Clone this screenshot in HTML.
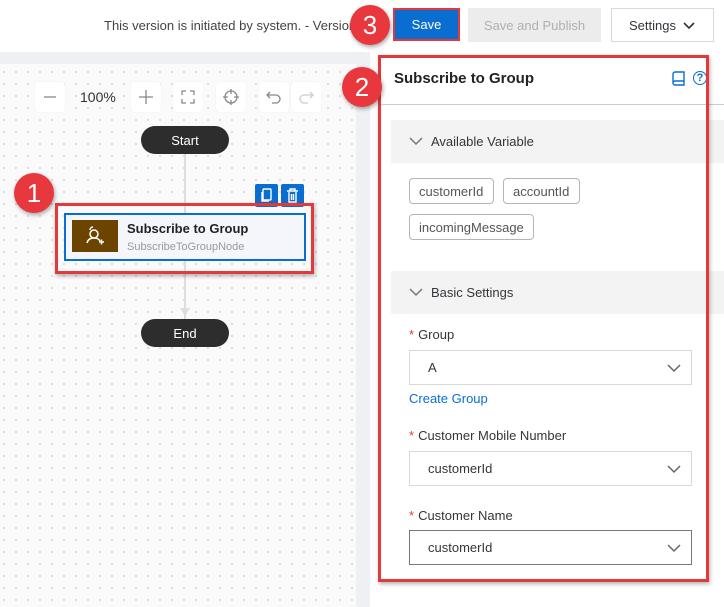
<!DOCTYPE html>
<html><head><meta charset="utf-8"><style>
*{box-sizing:border-box;margin:0;padding:0}
body{width:724px;height:607px;overflow:hidden;background:#eef0f4;font-family:"Liberation Sans",sans-serif;position:relative;color:#32363a}
.a{position:absolute}
.top{left:0;top:0;width:724px;height:52px;background:#fff}
.canvas{left:0;top:64px;width:356px;height:543px;background-color:#fafafa;background-image:radial-gradient(circle,#b4b4cc 0.6px,transparent 0.9px);background-size:12px 12px;background-position:10px 2px}
.panel{left:370px;top:52px;width:354px;height:555px;background:#fff}
.tb{top:82px;width:30px;height:30px;background:#fff;border-radius:4px;box-shadow:0 0 2px rgba(0,0,0,.05);display:flex;align-items:center;justify-content:center;color:#888;font-size:20px}
.pill{width:88px;height:28px;background:#2d2d2d;border-radius:14px;color:#fff;font-size:13px;display:flex;align-items:center;justify-content:center}
.call{width:40px;height:40px;border-radius:50%;background:#e8383d;color:#fff;font-size:26px;display:flex;align-items:center;justify-content:center;box-shadow:1px 2px 4px rgba(0,0,0,.35)}
.sec{left:391px;width:333px;height:43px;background:#f3f3f3;font-size:13px;display:flex;align-items:center;padding-left:40px}
.tag{height:26px;border:1px solid #b5b5b5;border-radius:4px;font-size:13px;color:#555;display:flex;align-items:center;padding:0 9px}
.lbl{left:409px;font-size:13px;color:#32363a}
.lbl b{color:#e5383b;font-weight:normal;margin-right:4px}
.sel{left:409px;width:283px;height:35px;border:1px solid #d9d9d9;font-size:13px;padding-left:18px;display:flex;align-items:center}
.chev{right:10px;top:10px;width:14px;height:14px}
</style></head><body>
<div class="a top"></div>
<div class="a" style="left:104px;top:18px;width:248px;overflow:hidden;white-space:nowrap;font-size:13px;color:#444">This version is initiated by system. - Version</div>
<div class="a" style="left:393px;top:8px;width:67px;height:33px;background:#0a6ed1;border:2px solid #e5383b;color:#fff;font-size:13px;display:flex;align-items:center;justify-content:center">Save</div>
<div class="a" style="left:468px;top:8px;width:133px;height:34px;background:#ececec;color:#b0b0b0;font-size:13px;display:flex;align-items:center;justify-content:center">Save and Publish</div>
<div class="a" style="left:611px;top:8px;width:103px;height:34px;background:#fff;border:1px solid #d9d9d9;font-size:13px;display:flex;align-items:center;justify-content:center">Settings <svg width="14" height="10" style="margin-left:6px" viewBox="0 0 14 10"><path d="M2 3l5 5 5-5" fill="none" stroke="#333" stroke-width="1.6"/></svg></div>

<div class="a canvas"></div>
<div class="a tb" style="left:35px"><svg width="14" height="14"><path d="M1 7h12" stroke="#888" stroke-width="1.3"/></svg></div>
<div class="a" style="left:80px;top:89px;font-size:14px;color:#333">100%</div>
<div class="a tb" style="left:131px"><svg width="16" height="16"><path d="M1 8h14M8 1v14" stroke="#888" stroke-width="1.3"/></svg></div>
<div class="a tb" style="left:173px"><svg width="14" height="14"><path d="M1 5V1h4M9 1h4v4M13 9v4H9M5 13H1V9" fill="none" stroke="#888" stroke-width="1.3"/></svg></div>
<div class="a tb" style="left:216px"><svg width="16" height="16"><circle cx="8" cy="8" r="6" fill="none" stroke="#888" stroke-width="1.3"/><path d="M8 0v5M8 11v5M0 8h5M11 8h5" stroke="#888" stroke-width="1.3"/></svg></div>
<div class="a tb" style="left:259px"><svg width="16" height="16"><path d="M4 3L1 6l3 3M1 6h9a4 4 0 010 8H6" fill="none" stroke="#888" stroke-width="1.3"/></svg></div>
<div class="a tb" style="left:291px"><svg width="16" height="16"><path d="M12 3l3 3-3 3M15 6H6a4 4 0 000 8h4" fill="none" stroke="#ccc" stroke-width="1.3"/></svg></div>
<div class="a" style="left:184px;top:154px;width:2px;height:166px;background:#ddd"></div>
<div class="a" style="left:180px;top:308px;width:0;height:0;border-left:5px solid transparent;border-right:5px solid transparent;border-top:8px solid #ddd"></div>
<div class="a pill" style="left:141px;top:126px">Start</div>
<div class="a pill" style="left:141px;top:319px">End</div>
<div class="a" style="left:255px;top:184px;width:23px;height:23px;background:#0a6ed1;border-radius:2px"><svg width="23" height="23"><rect x="8" y="5" width="8" height="11" rx="1" fill="none" stroke="#fff" stroke-width="1.4"/><path d="M7 8v9h7" fill="none" stroke="#fff" stroke-width="1.4"/></svg></div>
<div class="a" style="left:281px;top:184px;width:23px;height:23px;background:#0a6ed1;border-radius:2px"><svg width="23" height="23"><path d="M6 7h11M9 7V5h5v2M8 8v10h7V8M10.5 10v6M12.5 10v6" fill="none" stroke="#fff" stroke-width="1.4"/></svg></div>
<div class="a" style="left:55px;top:203px;width:259px;height:71px;border:3px solid #e5383b;box-shadow:1px 2px 4px rgba(0,0,0,.3)"></div>
<div class="a" style="left:64px;top:213px;width:242px;height:48px;border:2px solid #0a6ed1;background:#f5f6fc"></div>
<div class="a" style="left:72px;top:220px;width:46px;height:32px;background:#6b4400"><svg width="46" height="32"><circle cx="22" cy="14" r="4" fill="none" stroke="#fff" stroke-width="1.5"/><path d="M15 23c1-4 4-5 7-5s5 1 6 3M18 10a3 3 0 013 -3" fill="none" stroke="#fff" stroke-width="1.5"/><path d="M27 22h5M29.5 19.5v5" stroke="#fff" stroke-width="1.5"/></svg></div>
<div class="a" style="left:127px;top:221px;font-size:13px;font-weight:bold;color:#222">Subscribe to Group</div>
<div class="a" style="left:127px;top:241px;font-size:11px;color:#999">SubscribeToGroupNode</div>

<div class="a panel"></div>
<div class="a" style="left:394px;top:70px;font-size:15px;font-weight:bold;color:#222">Subscribe to Group</div>
<div class="a" style="left:672px;top:71px"><svg width="14" height="16"><path d="M3 1h9v13H3a2 2 0 01-2-2V3a2 2 0 012-2zM1 12a2 2 0 012-2h9" fill="none" stroke="#0a6ed1" stroke-width="1.4"/></svg></div>
<div class="a" style="left:693px;top:71px;width:14px;height:14px;border:1.5px solid #0a6ed1;border-radius:50%;color:#0a6ed1;font-size:11px;font-weight:bold;display:flex;align-items:center;justify-content:center">?</div>
<div class="a" style="left:378px;top:104px;width:346px;height:1px;background:#ccc"></div>
<div class="a sec" style="top:120px">Available Variable</div>
<div class="a sec" style="top:271px">Basic Settings</div>
<svg class="a" style="left:409px;top:136px" width="14" height="10"><path d="M1 2l6 6 6-6" fill="none" stroke="#777" stroke-width="1.5"/></svg>
<svg class="a" style="left:409px;top:287px" width="14" height="10"><path d="M1 2l6 6 6-6" fill="none" stroke="#777" stroke-width="1.5"/></svg>
<div class="a tag" style="left:409px;top:178px;width:85px">customerId</div>
<div class="a tag" style="left:503px;top:178px;width:77px">accountId</div>
<div class="a tag" style="left:409px;top:214px;width:125px">incomingMessage</div>
<div class="a lbl" style="top:327px"><b>*</b>Group</div>
<div class="a sel" style="top:350px">A<svg class="a chev" viewBox="0 0 14 14"><path d="M1 4l6 6 6-6" fill="none" stroke="#666" stroke-width="1.5"/></svg></div>
<div class="a" style="left:409px;top:391px;font-size:13px;color:#0a6ed1">Create Group</div>
<div class="a lbl" style="top:428px"><b>*</b>Customer Mobile Number</div>
<div class="a sel" style="top:451px">customerId<svg class="a chev" viewBox="0 0 14 14"><path d="M1 4l6 6 6-6" fill="none" stroke="#666" stroke-width="1.5"/></svg></div>
<div class="a lbl" style="top:508px"><b>*</b>Customer Name</div>
<div class="a sel" style="top:530px;border-color:#777">customerId<svg class="a chev" viewBox="0 0 14 14"><path d="M1 4l6 6 6-6" fill="none" stroke="#666" stroke-width="1.5"/></svg></div>
<div class="a" style="left:378px;top:55px;width:331px;height:527px;border:3px solid #e5383b;box-shadow:1px 2px 4px rgba(0,0,0,.3)"></div>

<div class="a call" style="left:14px;top:173px">1</div>
<div class="a call" style="left:342px;top:67px">2</div>
<div class="a call" style="left:350px;top:5px">3</div>
</body></html>
